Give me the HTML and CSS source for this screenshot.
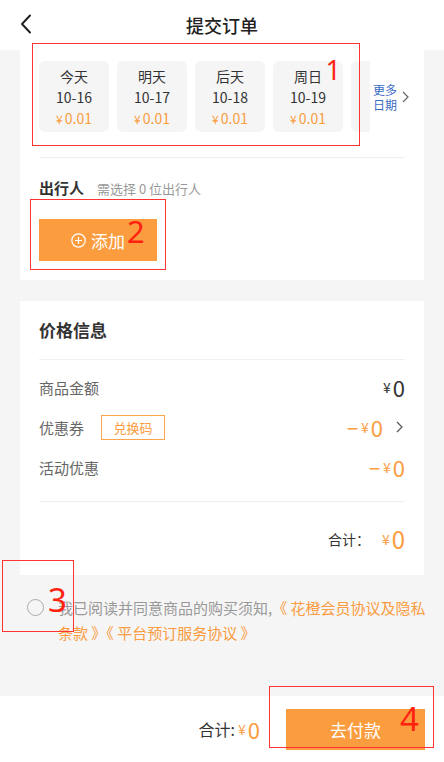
FILE: index.html
```html
<!DOCTYPE html>
<html lang="zh-CN">
<head>
    <meta charset="UTF-8">
    <meta name="viewport" content="width=device-width, initial-scale=1.0">
    <title>提交订单</title>
    <link rel="stylesheet" href="styles.css">
</head>
<body>
    <div class="page">
        <header class="nav-bar">
            <span class="back">
                <svg width="12" height="20" viewBox="0 0 12 20"><path d="M10 1.5 L2 10 L10 18.5" fill="none" stroke="#222" stroke-width="2" stroke-linecap="round" stroke-linejoin="round"/></svg>
            </span>
            <h1>提交订单</h1>
        </header>

        <main class="content">
            <section class="card card-trip">
                <div class="date-row">
                    <div class="date-list">
                        <div class="date-item"><span>今天</span><span>10-16</span><span class="price"><small>¥</small>0.01</span></div>
                        <div class="date-item"><span>明天</span><span>10-17</span><span class="price"><small>¥</small>0.01</span></div>
                        <div class="date-item"><span>后天</span><span>10-18</span><span class="price"><small>¥</small>0.01</span></div>
                        <div class="date-item"><span>周日</span><span>10-19</span><span class="price"><small>¥</small>0.01</span></div>
                        <div class="date-item"></div>
                    </div>
                    <div class="more-dates">
                        <span class="more-text">更多<br>日期</span>
                        <svg width="7" height="12" viewBox="0 0 7 12"><path d="M1 1 L6 6 L1 11" fill="none" stroke="#666" stroke-width="1.2"/></svg>
                    </div>
                </div>

                <div class="traveler">
                    <div class="traveler-head">
                        <span class="label">出行人</span>
                        <span class="hint">需选择 0 位出行人</span>
                    </div>
                    <button class="add-button">
                        <svg width="15" height="15" viewBox="0 0 15 15"><circle cx="7.5" cy="7.5" r="6.7" fill="none" stroke="#fff" stroke-width="1.2"/><path d="M7.5 4 V11 M4 7.5 H11" stroke="#fff" stroke-width="1.2"/></svg>
                        添加
                    </button>
                </div>
            </section>

            <section class="card card-price">
                <h2>价格信息</h2>
                <div class="price-rows">
                    <div class="price-row">
                        <span class="row-label">商品金额</span>
                        <span class="amount"><small>¥</small>0</span>
                    </div>
                    <div class="price-row">
                        <span class="row-label">优惠券 <span class="code-tag">兑换码</span></span>
                        <span class="amount orange"><span class="minus">−</span><small>¥</small>0
                            <svg class="row-arrow" width="7" height="12" viewBox="0 0 7 12"><path d="M1 1 L6 6 L1 11" fill="none" stroke="#555" stroke-width="1.2"/></svg>
                        </span>
                    </div>
                    <div class="price-row">
                        <span class="row-label">活动优惠</span>
                        <span class="amount orange"><span class="minus">−</span><small>¥</small>0</span>
                    </div>
                </div>
                <div class="price-total">
                    合计：<span class="amount orange"><small>¥</small>0</span>
                </div>
            </section>

            <div class="agreement">
                <span class="radio"></span>
                <p>我已阅读并同意商品的购买须知,<span class="link">《 花橙会员协议及隐私条款 》《 平台预订服务协议 》</span></p>
            </div>
        </main>

        <footer class="pay-bar">
            <span class="pay-total">合计:<span class="amount orange"><small>¥</small>0</span></span>
            <button class="pay-button">去付款</button>
        </footer>

        <!-- annotation marks -->
        <div class="mark mark-1"><span>1</span></div>
        <div class="mark mark-2"><span>2</span></div>
        <div class="mark mark-3"><span>3</span></div>
        <div class="mark mark-4"><span>4</span></div>
    </div>
</body>
</html>
```

FILE: styles.css
```css
* {
    box-sizing: border-box;
}
body {
    margin: 0;
    font-family: "Noto Sans CJK SC", "Noto Sans", sans-serif;
    color: #333;
    background: #fff;
}
.page {
    position: relative;
    width: 444px;
    height: 762px;
    display: flex;
    flex-direction: column;
    overflow: hidden;
}
.nav-bar {
    height: 50px;
    display: flex;
    align-items: center;
    justify-content: center;
    position: relative;
    background: #fff;
}
.nav-bar h1 {
    margin: 0;
    font-size: 18px;
    font-weight: 500;
    color: #222;
}
.back {
    position: absolute;
    left: 20px;
    top: 14px;
    display: flex;
}
.content {
    flex: 1;
    background: #f5f5f5;
    padding: 0 20px;
}
.card {
    background: #fff;
    padding: 0 19px;
}
.card-trip {
    padding-top: 11px;
    padding-bottom: 19px;
}
.date-row {
    display: flex;
    align-items: center;
    padding-bottom: 25px;
    border-bottom: 1px solid #f0f0f0;
}
.date-list {
    width: 331px;
    display: flex;
    gap: 8px;
    overflow: hidden;
    flex-shrink: 0;
}
.date-item {
    flex: 0 0 70px;
    height: 71px;
    border-radius: 6px;
    background: #f5f5f5;
    display: flex;
    flex-direction: column;
    align-items: center;
    padding-top: 5px;
    font-size: 14px;
    line-height: 21px;
    color: #333;
}
.date-item .price {
    color: #fa9c3f;
}
.date-item small {
    font-size: 12px;
    margin-right: 2px;
}
.more-dates {
    margin-left: 3px;
    display: flex;
    align-items: center;
    gap: 5px;
    flex-shrink: 0;
    white-space: nowrap;
}
.more-text {
    font-size: 12px;
    line-height: 15px;
    color: #3b6cc4;
}
.traveler-head {
    display: flex;
    align-items: baseline;
    gap: 13px;
    padding-top: 19px;
    line-height: 22px;
}
.traveler-head .label {
    font-size: 15px;
    font-weight: 700;
    color: #333;
}
.traveler-head .hint {
    font-size: 13px;
    color: #999;
}
.add-button {
    margin-top: 19px;
    width: 118px;
    height: 42px;
    border: none;
    background: #fb9d3e;
    color: #fff;
    font-family: inherit;
    font-size: 17px;
    display: flex;
    align-items: center;
    justify-content: center;
    gap: 5px;
    padding: 0;
}
.card-price {
    margin-top: 21px;
}
.card-price h2 {
    margin: 0;
    height: 59px;
    line-height: 57px;
    font-size: 17px;
    font-weight: 700;
    color: #333;
    border-bottom: 1px solid #f0f0f0;
}
.price-rows {
    padding-top: 7px;
    padding-bottom: 14px;
    border-bottom: 1px solid #f0f0f0;
}
.price-row {
    height: 40px;
    display: flex;
    align-items: center;
    justify-content: space-between;
}
.row-label {
    font-size: 15px;
    color: #666;
    display: flex;
    align-items: center;
}
.code-tag {
    margin-left: 17px;
    height: 25px;
    width: 64px;
    border: 1px solid #fba553;
    color: #fa9c3f;
    font-size: 13px;
    display: flex;
    align-items: center;
    justify-content: center;
}
.amount {
    font-size: 22px;
    color: #333;
    display: flex;
    align-items: center;
}
.amount small {
    font-size: 14px;
    margin-right: 2px;
}
.minus {
    font-size: 20px;
    margin-right: 3px;
}
.orange {
    color: #fa9c3f;
}
.row-arrow {
    margin-left: 13px;
    margin-right: 2px;
}
.price-total {
    height: 73px;
    display: flex;
    align-items: center;
    justify-content: flex-end;
    font-size: 14px;
    color: #333;
}
.price-total .amount {
    margin-left: 12px;
    font-size: 24px;
}
.agreement {
    display: flex;
    margin-top: 20px;
    padding-left: 7px;
}
.radio {
    width: 17px;
    height: 17px;
    border: 1px solid #aaa;
    border-radius: 50%;
    margin-top: 4px;
    flex-shrink: 0;
}
.agreement p {
    margin: 0 0 0 14px;
    font-size: 15px;
    line-height: 25px;
    color: #999;
    width: 372px;
    flex-shrink: 0;
}
.agreement .link {
    color: #fa9c3f;
}
.pay-bar {
    height: 66px;
    background: #fff;
    display: flex;
    align-items: center;
    justify-content: flex-end;
    padding-right: 19px;
}
.pay-total {
    display: flex;
    align-items: center;
    font-size: 16px;
    color: #333;
    margin-right: 26px;
}
.pay-total .amount {
    margin-left: 3px;
}
.pay-button {
    width: 139px;
    height: 41px;
    border: none;
    background: #fb9d3e;
    color: #fff;
    font-family: inherit;
    font-size: 17px;
    padding: 0;
}
.mark {
    position: absolute;
    border: 1.5px solid #f33;
}
.mark span {
    position: absolute;
    color: #f21;
    font-family: "Noto Sans", sans-serif;
    line-height: 1;
}
.mark-1 {
    left: 32px;
    top: 43px;
    width: 328px;
    height: 103px;
}
.mark-1 span {
    right: 18px;
    top: 12px;
    font-size: 27px;
}
.mark-2 {
    left: 30px;
    top: 199px;
    width: 136px;
    height: 71px;
}
.mark-2 span {
    left: 96px;
    top: 16px;
    font-size: 31px;
}
.mark-3 {
    left: 2px;
    top: 560px;
    width: 72px;
    height: 72px;
}
.mark-3 span {
    left: 45px;
    top: 22px;
    font-size: 33px;
}
.mark-4 {
    left: 269px;
    top: 686px;
    width: 165px;
    height: 62px;
}
.mark-4 span {
    left: 130px;
    top: 15px;
    font-size: 33px;
}
```
